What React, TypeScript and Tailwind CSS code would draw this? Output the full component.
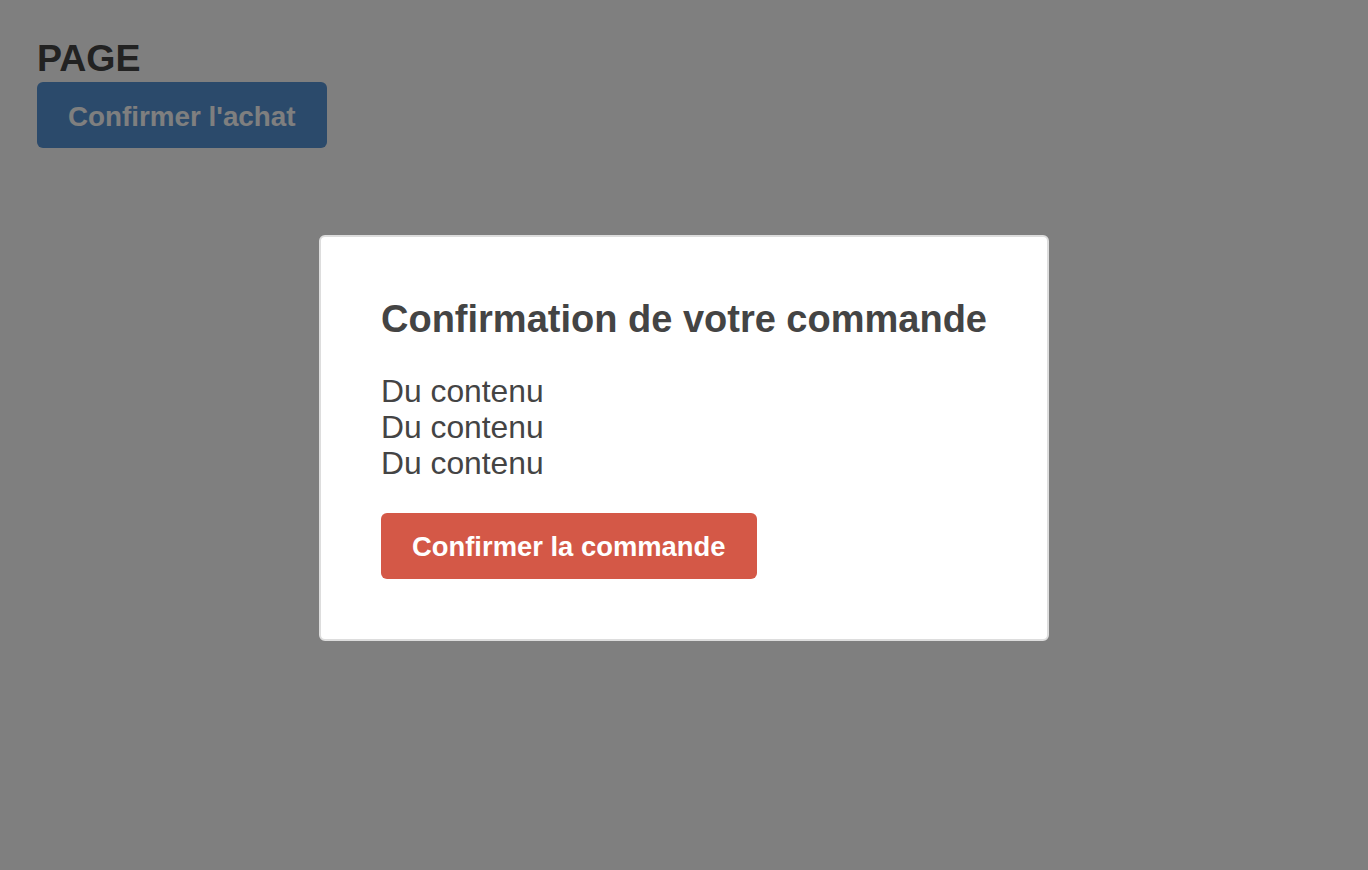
import React from "react";

export default function App() {
  return (
    <div className="relative min-h-[870px] w-full bg-white font-['Liberation_Sans',Arial,Helvetica,sans-serif]">
      <div className="px-[37px] pt-[40px]">
        <h1 className="text-[37.5px] font-bold leading-[37px] text-[#444444]">PAGE</h1>
        <button className="mt-[5px] flex h-[66px] items-center rounded-[6px] bg-[#5694d6] px-[31px] pt-[3px] text-[27.8px] font-bold text-white">
          Confirmer l'achat
        </button>
      </div>
      <div className="fixed inset-0 flex items-center justify-center bg-black/50 pt-[5px]">
        <div className="w-[730px] rounded-[6px] border-2 border-[#dddddd] bg-white p-[60px] text-[#444444]">
          <h2 className="pt-[1px] text-[38px] font-bold leading-[43px]">Confirmation de votre commande</h2>
          <div className="mt-[32px] text-[31.8px] leading-[36px]">
            <div>Du contenu</div>
            <div>Du contenu</div>
            <div>Du contenu</div>
          </div>
          <button className="mt-[32px] flex h-[66px] items-center rounded-[6px] bg-[#d45847] px-[31px] pt-[3px] text-[27.4px] font-bold text-white">
            Confirmer la commande
          </button>
        </div>
      </div>
    </div>
  );
}
